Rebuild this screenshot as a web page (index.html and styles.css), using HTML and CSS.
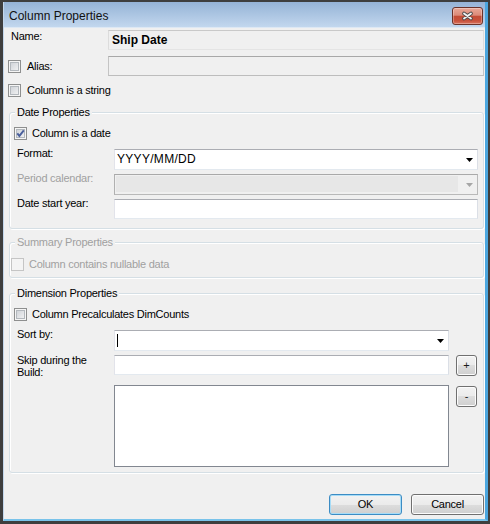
FILE: index.html
```html
<!DOCTYPE html>
<html>
<head>
<meta charset="utf-8">
<title>Column Properties</title>
<link rel="stylesheet" href="styles.css">
</head>
<body>
<div class="window">
  <div class="frame">
    <div class="titlebar">
      <span class="title">Column Properties</span>
      <div class="close">
        <svg width="13" height="10" viewBox="0 0 13 10"><path d="M3 2.5L10 7.5M10 2.5L3 7.5" stroke="#4a4a4a" stroke-width="3.6" stroke-linecap="round"/><path d="M3 2.5L10 7.5M10 2.5L3 7.5" stroke="#f4f4f4" stroke-width="1.8" stroke-linecap="round"/></svg>
      </div>
    </div>
    <div class="client">
      <div class="row row-name">
        <span class="lbl-name">Name:</span>
        <div class="field field-ro">Ship Date</div>
      </div>
      <div class="row row-alias">
        <div class="lead"><span class="cb"></span><span class="txt">Alias:</span></div>
        <div class="field field-dis"></div>
      </div>
      <div class="row row-string">
        <span class="cb"></span><span class="txt">Column is a string</span>
      </div>

      <div class="group g-date">
        <div class="gtitle">Date Properties</div>
        <div class="crow">
          <span class="cb"><svg width="11" height="11" viewBox="0 0 11 11"><path d="M2.3 5.3L4.4 7.9L8.8 2.4" fill="none" stroke="#4a5f9c" stroke-width="1.9"/></svg></span>
          <span class="txt">Column is a date</span>
        </div>
        <div class="frow r-format">
          <span class="flbl">Format:</span>
          <div class="combo w364">
            <div class="ctext">YYYY/MM/DD</div>
            <div class="carrow"><svg width="7" height="4" viewBox="0 0 7 4"><path d="M0 0H7L3.5 4Z" fill="#000"/></svg></div>
          </div>
        </div>
        <div class="frow r-period">
          <span class="flbl dim">Period calendar:</span>
          <div class="combo cdis w364">
            <div class="cband"></div>
            <div class="carrow"><svg width="7" height="4" viewBox="0 0 7 4"><path d="M0 0H7L3.5 4Z" fill="#a6a6a6"/></svg></div>
          </div>
        </div>
        <div class="frow r-start">
          <span class="flbl">Date start year:</span>
          <div class="tbox w364"></div>
        </div>
      </div>

      <div class="group g-sum">
        <div class="gtitle dim">Summary Properties</div>
        <div class="crow">
          <span class="cb dis"></span>
          <span class="txt dim">Column contains nullable data</span>
        </div>
      </div>

      <div class="group g-dim">
        <div class="gtitle">Dimension Properties</div>
        <div class="crow">
          <span class="cb"></span>
          <span class="txt">Column Precalculates DimCounts</span>
        </div>
        <div class="frow r-sort">
          <span class="flbl">Sort by:</span>
          <div class="combo w335">
            <div class="ctext"><span class="caret"></span></div>
            <div class="carrow"><svg width="7" height="4" viewBox="0 0 7 4"><path d="M0 0H7L3.5 4Z" fill="#000"/></svg></div>
          </div>
        </div>
        <div class="frow r-skip">
          <span class="flbl flbl2">Skip during the<br>Build:</span>
          <div class="tbox w335"></div>
          <div class="sbtn">+</div>
        </div>
        <div class="frow r-list">
          <span class="flbl"></span>
          <div class="lbox"></div>
          <div class="sbtn sbtn-minus">-</div>
        </div>
      </div>

      <div class="btnrow">
        <div class="btn btn-default">OK</div>
        <div class="btn">Cancel</div>
      </div>
    </div>
  </div>
</div>
</body>
</html>
```

FILE: styles.css
```css
* { box-sizing: border-box; }
html, body { margin: 0; padding: 0; }
body {
  width: 490px;
  height: 524px;
  overflow: hidden;
  background: #3e3e3e;
  font-family: "Liberation Sans", Arial, sans-serif;
  font-size: 11px;
  color: #000;
}
.window {
  width: 490px;
  height: 524px;
  border-style: solid;
  border-color: #3e3e3e;
  border-width: 2px 2px 3px 3px;
}
.frame {
  height: 100%;
  display: flex;
  flex-direction: column;
  border-left: 1px solid #c3d7ec;
  border-right: 3px solid #4ba6de;
  border-bottom: 2px solid #79c3ea;
}
.titlebar {
  flex: none;
  height: 26px;
  display: flex;
  justify-content: space-between;
  align-items: flex-start;
  background: linear-gradient(#95b3d6, #c2d7ee);
  border-bottom: 1px solid #dde8f4;
}
.title {
  margin: 7px 0 0 5px;
  font-size: 12px;
  line-height: 14px;
  color: #111;
}
.close {
  margin: 5px 2px 0 0;
  width: 31px;
  height: 18px;
  border: 1px solid #6b332a;
  border-radius: 3px;
  background: linear-gradient(#e9a898 0%, #dc8a78 45%, #c44c36 52%, #c8523c 80%, #d9745f 100%);
  box-shadow: inset 0 0 0 1px rgba(255, 255, 255, 0.3);
  display: flex;
  align-items: center;
  justify-content: center;
}
.close svg { display: block; }
.client {
  flex: 1;
  background: #f0f0f0;
  padding: 2px 1px 0 5px;
  overflow: hidden;
}
.row { display: flex; }
.row-name { height: 20px; }
.lbl-name {
  width: 99px;
  flex: none;
  padding-left: 2px;
  line-height: 13px;
  letter-spacing: -0.25px;
}
.field {
  height: 20px;
  border: 1px solid;
}
.field-ro {
  width: 376px;
  background: #f0f0f0;
  border-color: #c9c9c9 #dcdcdc #e4e4e4 #dcdcdc;
  padding: 0 3px;
  font-weight: bold;
  font-size: 12px;
  line-height: 18px;
}
.row-alias {
  margin-top: 6px;
  height: 20px;
  align-items: center;
}
.lead {
  width: 100px;
  flex: none;
  margin-left: -1px;
  display: flex;
  align-items: center;
  gap: 6px;
}
.field-dis {
  width: 376px;
  background: #f0f0f0;
  border-color: #a8a8a8 #c4c4c4 #bdbdbd #c4c4c4;
}
.row-string {
  margin-top: 8px;
  margin-left: -1px;
  height: 13px;
  align-items: center;
  gap: 6px;
}
.cb {
  flex: none;
  width: 13px;
  height: 13px;
  border: 1px solid #8e8f8f;
  background: linear-gradient(135deg, #c8ccd2, #f8f8f8);
  box-shadow: inset 0 0 0 1px #f5f5f5, inset 0 0 0 2px #b3b8bd;
}
.cb svg { display: block; }
.cb.dis {
  border-color: #c5c5c5;
  background: #f4f4f4;
  box-shadow: none;
}
.txt {
  line-height: 13px;
  letter-spacing: -0.25px;
  white-space: nowrap;
}
.dim { color: #a0a0a0; }

.group {
  border: 1px solid #d5dfe5;
  border-radius: 3px;
  box-shadow: inset 1px 1px 0 #fff, 1px 1px 0 #fff;
  padding: 0 6px 0 4px;
}
.gtitle {
  width: max-content;
  margin: -7px 0 0 1px;
  padding: 0 2px;
  background: #f0f0f0;
  line-height: 13px;
  letter-spacing: -0.25px;
}
.g-date { margin-top: 15px; padding-right: 5px; padding-bottom: 9px; }
.g-sum { margin-top: 13px; padding-bottom: 6px; }
.g-dim { margin-top: 15px; padding-right: 6px; padding-bottom: 5px; }

.crow {
  display: flex;
  align-items: center;
  gap: 5px;
  height: 13px;
  margin-top: 8px;
}
.g-sum .crow { margin-top: 9px; margin-left: -3px; }

.frow { display: flex; align-items: flex-start; }
.flbl {
  width: 100px;
  flex: none;
  padding-left: 3px;
  margin-top: -2px;
  line-height: 13px;
  letter-spacing: -0.25px;
  white-space: nowrap;
}
.flbl2 { line-height: 12px; margin-top: -1px; }
.r-format { margin-top: 9px; height: 21px; }
.r-period { margin-top: 4px; height: 21px; }
.r-start { margin-top: 4px; height: 20px; }
.r-sort { margin-top: 9px; height: 21px; }
.r-skip { margin-top: 4px; height: 21px; }
.r-list { margin-top: 9px; height: 82px; }

.w364 { width: 364px; flex: none; }
.w335 { width: 335px; flex: none; }

.combo {
  height: 21px;
  display: flex;
  background: #fff;
  border: 1px solid;
  border-color: #abadb3 #dbdfe6 #e3e9ef #e2e3ea;
}
.ctext {
  flex: 1;
  padding-left: 2px;
  font-size: 12px;
  line-height: 19px;
  letter-spacing: 0.3px;
  white-space: nowrap;
}
.caret {
  display: block;
  width: 1px;
  height: 13px;
  margin-top: 3px;
  background: #000;
}
.carrow {
  width: 16px;
  flex: none;
  display: flex;
  align-items: center;
  justify-content: center;
}
.carrow svg { display: block; }
.combo.cdis {
  background: #f0f0f0;
  border-color: #a9a9a9 #b9b9b9 #b9b9b9 #b0b0b0;
}
.cband {
  flex: 1;
  margin: 1px 3px 2px 1px;
  background: #e7e7e7;
}
.tbox {
  height: 20px;
  background: #fff;
  border: 1px solid;
  border-color: #abadb3 #dbdfe6 #e3e9ef #e2e3ea;
}
.lbox {
  width: 335px;
  flex: none;
  height: 82px;
  background: #fff;
  border: 1px solid #828790;
}
.sbtn {
  flex: none;
  width: 21px;
  height: 21px;
  margin-left: 7px;
  border: 1px solid #707070;
  border-radius: 3px;
  background: linear-gradient(#f2f2f2 0%, #ebebeb 50%, #dddddd 50%, #cfcfcf 100%);
  box-shadow: inset 0 0 0 1px #fcfcfc;
  display: flex;
  align-items: center;
  justify-content: center;
  font-size: 11px;
  line-height: 11px;
  color: #1a1a1a;
}
.sbtn-minus { margin-top: 1px; }

.btnrow {
  display: flex;
  justify-content: flex-end;
  gap: 9px;
  margin-top: 21px;
}
.btn {
  width: 73px;
  height: 21px;
  border: 1px solid #707070;
  border-radius: 3px;
  background: linear-gradient(#f2f2f2 0%, #ebebeb 50%, #dddddd 50%, #cfcfcf 100%);
  box-shadow: inset 0 0 0 1px #fcfcfc;
  text-align: center;
  line-height: 19px;
  letter-spacing: -0.25px;
}
.btn-default {
  border-color: #3c8cc4;
  box-shadow: inset 0 0 0 1px #a6dcf7;
}
```
